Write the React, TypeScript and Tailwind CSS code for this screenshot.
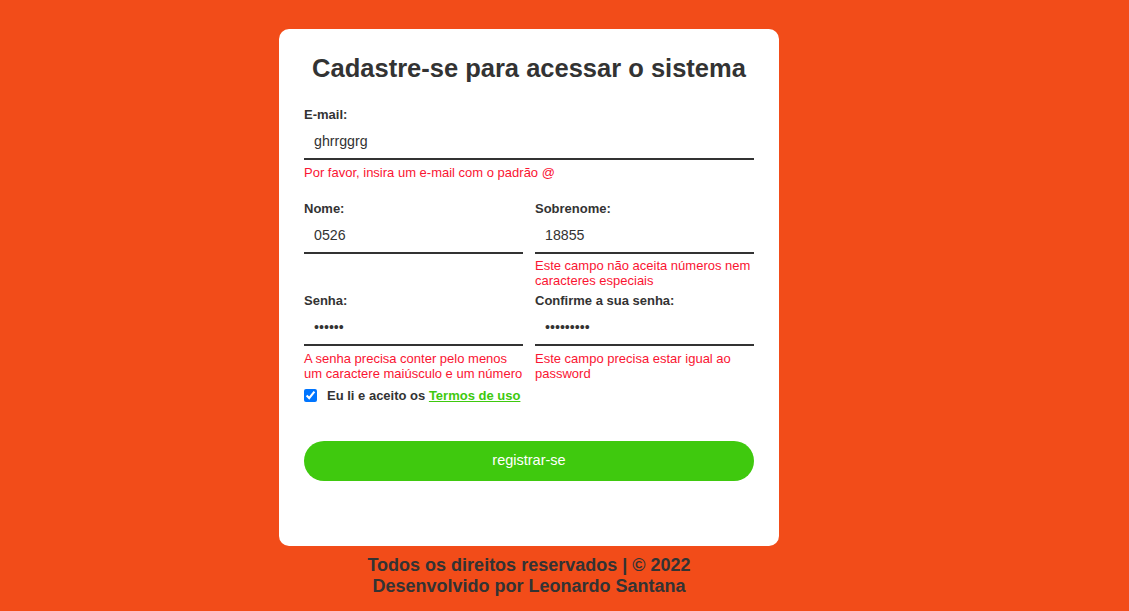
import React from 'react';

const font = { fontFamily: '"Liberation Sans", Arial, sans-serif' };

type FieldProps = {
  label: string;
  value: string;
  type?: string;
  error?: string;
  errorGap?: string;
};

const Field: React.FC<FieldProps> = ({ label, value, type = 'text', error, errorGap = 'mt-[4px]' }) => (
  <div className="flex flex-col">
    <label className="text-[13px] leading-4 font-bold text-[#333]">{label}</label>
    <input
      type={type}
      defaultValue={value}
      className="h-[37px] w-full border-b-2 border-[#333] bg-transparent px-[10px] text-[14.2px] text-[#333] outline-none"
    />
    {error && (
      <span className={`${errorGap} text-[13px] leading-[15px] text-[#fa1432]`}>{error}</span>
    )}
  </div>
);

export default function App() {
  return (
    <div className="min-h-[611px] w-full bg-[#f24c19]" style={font}>
      <div className="w-[1058px] pt-[29px] flex flex-col items-center">
        <div className="w-[500px] h-[517px] rounded-[10px] bg-white px-[25px] pt-[24px]">
          <h1 className="text-center text-[25.5px] leading-[30px] font-bold text-[#333]">
            Cadastre-se para acessar o sistema
          </h1>

          <div className="mt-[24px]">
            <Field
              label="E-mail:"
              value="ghrrggrg"
              errorGap="mt-[5px]"
              error="Por favor, insira um e-mail com o padrão @"
            />
          </div>

          <div className="mt-[21px] grid grid-cols-2 gap-x-3">
            <Field label="Nome:" value="0526" />
            <Field
              label="Sobrenome:"
              value="18855"
              error="Este campo não aceita números nem caracteres especiais"
            />
          </div>

          <div className="mt-[5px] grid grid-cols-2 gap-x-3">
            <Field
              label="Senha:"
              value="abcdef"
              type="password"
              errorGap="mt-[5px]"
              error="A senha precisa conter pelo menos um caractere maiúsculo e um número"
            />
            <Field
              label="Confirme a sua senha:"
              value="abcdefghi"
              type="password"
              errorGap="mt-[5px]"
              error="Este campo precisa estar igual ao password"
            />
          </div>

          <div className="mt-[5px] flex items-center">
            <input type="checkbox" defaultChecked className="m-0 h-[13px] w-[13px]" />
            <span className="ml-[10px] text-[13px] font-bold text-[#333]">
              Eu li e aceito os{' '}
              <a href="#" className="text-[#3ec90e] underline">
                Termos de uso
              </a>
            </span>
          </div>

          <button className="mt-[35px] h-[40px] w-full rounded-full bg-[#3fc90e] text-[14.5px] text-white">
            registrar-se
          </button>
        </div>

        <footer className="mt-[9px] text-center text-[18px] leading-[21px] font-bold text-[#333]">
          <p>Todos os direitos reservados | © 2022</p>
          <p>Desenvolvido por Leonardo Santana</p>
        </footer>
      </div>
    </div>
  );
}
